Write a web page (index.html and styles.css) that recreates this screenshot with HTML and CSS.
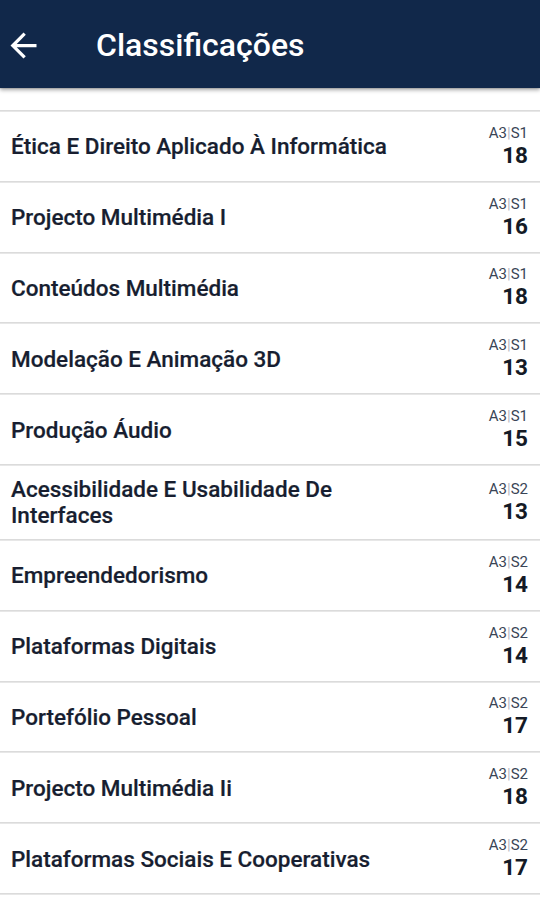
FILE: index.html
```html
<!DOCTYPE html>
<html>
<head>
<meta charset="UTF-8">
<title>Classificações</title>
<link rel="stylesheet" href="styles.css">
</head>
<body>
	<div class="topbar">
		<svg class="back" width="39" height="39" viewBox="0 0 24 24">
			<path d="M20 11H7.83l5.59-5.59L12 4l-8 8 8 8 1.41-1.41L7.83 13H20v-2z" fill="#ffffff"/>
		</svg>
		<span class="title">Classificações</span>
	</div>
	<div class="list">
		<div class="row partial"></div>
		<div class="row">
			<div class="name">Ética E Direito Aplicado À Informática</div>
			<div class="grade"><span class="term">A3<i>|</i>S1</span><b>18</b></div>
		</div>
		<div class="row">
			<div class="name">Projecto Multimédia I</div>
			<div class="grade"><span class="term">A3<i>|</i>S1</span><b>16</b></div>
		</div>
		<div class="row">
			<div class="name">Conteúdos Multimédia</div>
			<div class="grade"><span class="term">A3<i>|</i>S1</span><b>18</b></div>
		</div>
		<div class="row">
			<div class="name">Modelação E Animação 3D</div>
			<div class="grade"><span class="term">A3<i>|</i>S1</span><b>13</b></div>
		</div>
		<div class="row">
			<div class="name">Produção Áudio</div>
			<div class="grade"><span class="term">A3<i>|</i>S1</span><b>15</b></div>
		</div>
		<div class="row tall">
			<div class="name">Acessibilidade E Usabilidade De Interfaces</div>
			<div class="grade"><span class="term">A3<i>|</i>S2</span><b>13</b></div>
		</div>
		<div class="row">
			<div class="name">Empreendedorismo</div>
			<div class="grade"><span class="term">A3<i>|</i>S2</span><b>14</b></div>
		</div>
		<div class="row">
			<div class="name">Plataformas Digitais</div>
			<div class="grade"><span class="term">A3<i>|</i>S2</span><b>14</b></div>
		</div>
		<div class="row">
			<div class="name">Portefólio Pessoal</div>
			<div class="grade"><span class="term">A3<i>|</i>S2</span><b>17</b></div>
		</div>
		<div class="row">
			<div class="name">Projecto Multimédia Ii</div>
			<div class="grade"><span class="term">A3<i>|</i>S2</span><b>18</b></div>
		</div>
		<div class="row">
			<div class="name">Plataformas Sociais E Cooperativas</div>
			<div class="grade"><span class="term">A3<i>|</i>S2</span><b>17</b></div>
		</div>
		<div class="row partial-end"></div>
	</div>
</body>
</html>
```
FILE: styles.css
```css
body{
	margin: 0;
	background-color: #e9e9e9;
	font-family: Roboto, "Liberation Sans", sans-serif;
	color: #171e30;
}
.topbar{
	height: 88px;
	background-color: #11284a;
	display: flex;
	align-items: center;
	box-shadow: 0 2px 4px rgba(0,0,0,0.35);
	position: relative;
	z-index: 1;
}
.back{
	margin-left: 4px;
	margin-top: 2px;
}
.title{
	margin-left: 53px;
	color: #ffffff;
	font-size: 32px;
	font-weight: 500;
	margin-top: 2px;
}
.list{
	display: flex;
	flex-direction: column;
	gap: 2px;
	padding-top: 1px;
}
.row{
	background-color: #ffffff;
	height: 68.8px;
	flex-shrink: 0;
	display: flex;
	align-items: center;
	justify-content: space-between;
	padding: 0 12px 0 11px;
	box-shadow: 0 1px 1px rgba(0,0,0,0.06);
}
.row.partial{
	height: 21px;
}
.row.partial-end{
	height: 5px;
	box-shadow: none;
}
.row.tall{
	height: 73px;
}
.name{
	font-size: 22.5px;
	font-weight: 500;
	line-height: 26px;
	max-width: 400px;
	-webkit-text-stroke: 0.2px #171e30;
}
.grade{
	display: flex;
	flex-direction: column;
	align-items: flex-end;
	margin-top: 1px;
}
.term{
	font-size: 15px;
	color: #3a4556;
	line-height: 17px;
}
.term i{
	font-style: normal;
	color: #b3b8bf;
}
.grade b{
	font-size: 22.5px;
	font-weight: 700;
	line-height: 27px;
	color: #141a26;
}
```
